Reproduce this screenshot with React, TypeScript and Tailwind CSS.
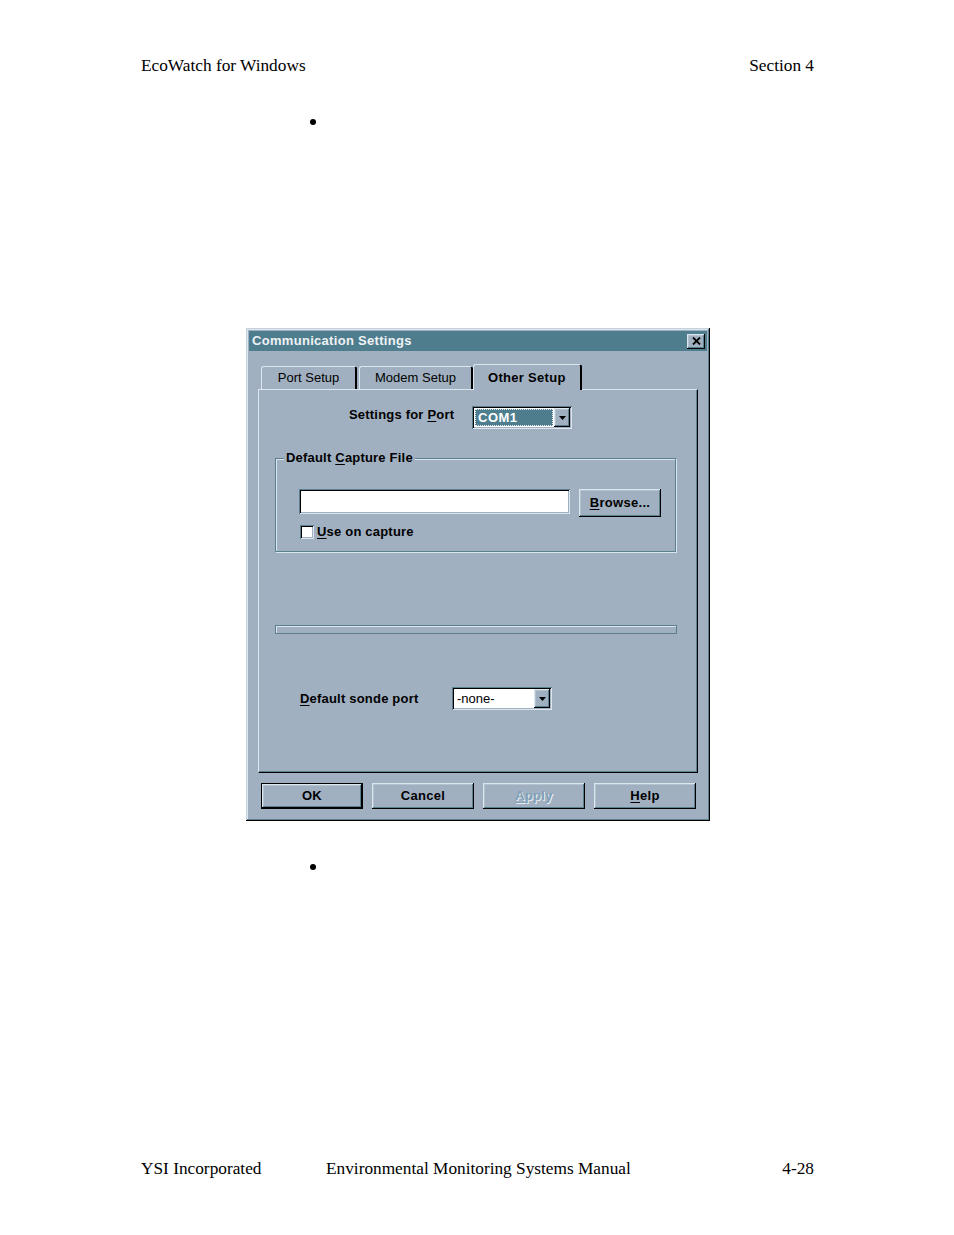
import React from 'react';

// Win95-style bevels, tinted to the blue-grey scheme of the screenshot
const raised =
  'shadow-[inset_-1px_-1px_0_#000,inset_1px_1px_0_#dce6ee,inset_-2px_-2px_0_#5a7f8e,inset_2px_2px_0_#b4c2ce]';
const sunken =
  'shadow-[inset_1px_1px_0_#5a7f8e,inset_-1px_-1px_0_#dce6ee,inset_2px_2px_0_#000,inset_-2px_-2px_0_#a0b0c0]';

const U = ({ children }: { children: React.ReactNode }) => <span className="underline underline-offset-2">{children}</span>;

const Arrow = () => (
  <div className={`w-[16px] h-full bg-[#a0b0c0] flex items-center justify-center ${raised}`}>
    <svg width="7" height="4" viewBox="0 0 7 4">
      <path d="M0 0h7L3.5 4z" fill="#000" />
    </svg>
  </div>
);

const Tab = ({ label, selected }: { label: string; selected?: boolean }) => (
  <div
    className={
      selected
        ? 'relative z-10 -mb-px -mx-[2px] h-[26px] px-[14px] flex items-center bg-[#a0b0c0] rounded-t-[3px] border-l border-t border-[#dce6ee] border-r-2 border-r-black font-bold tracking-[0.3px]'
        : 'h-[23px] flex items-center justify-center bg-[#a0b0c0] rounded-t-[3px] border-l border-t border-[#dce6ee] border-r-2 border-r-black'
    }
  >
    {label}
  </div>
);

const Button = ({ children, isDefault, disabled }: { children: React.ReactNode; isDefault?: boolean; disabled?: boolean }) => (
  <div
    className={`w-[102px] h-[26px] flex items-center justify-center font-bold tracking-[0.3px] bg-[#a0b0c0] ${raised} ${
      isDefault ? 'border border-black' : ''
    } ${disabled ? 'text-[#7fa0b8] [text-shadow:1px_1px_0_#e8eef2]' : 'text-black'}`}
  >
    {children}
  </div>
);

const Bullet = () => (
  <div className="pl-[310px]">
    <div className="w-[6px] h-[6px] rounded-full bg-black" />
  </div>
);

export default function App() {
  return (
    <div className="w-[954px] h-[1235px] bg-white text-black relative font-['Liberation_Serif',serif]">
      <div className="flex justify-between pl-[141px] pr-[140px] pt-[56px] text-[17.3px] leading-[20px]">
        <span>EcoWatch for Windows</span>
        <span>Section 4</span>
      </div>

      <div className="mt-[43px]">
        <Bullet />
      </div>

      {/* dialog */}
      <div
        className={`ml-[246px] mt-[203px] w-[464px] h-[493px] bg-[#a0b0c0] p-[3px] font-['Liberation_Sans',Arial,sans-serif] text-[13px] text-black shadow-[inset_-1px_-1px_0_#000,inset_1px_1px_0_#c4d2dc,inset_-2px_-2px_0_#5a7f8e,inset_2px_2px_0_#dce6ee]`}
      >
        <div className="h-[20px] bg-[#4e7e8e] flex items-center justify-between pl-[3px] pr-[2px]">
          <span className="font-bold text-[#eef2f4] tracking-[0.3px]">Communication Settings</span>
          <div className={`w-[18px] h-[15px] bg-[#a0b0c0] flex items-center justify-center ${raised}`}>
            <svg width="9" height="8" viewBox="0 0 9 8">
              <path d="M1 0.5L8 7.5M8 0.5L1 7.5" stroke="#000" strokeWidth="1.8" />
            </svg>
          </div>
        </div>

        {/* tabs */}
        <div className="mt-[12px] ml-[9px] mr-[9px]">
          <div className="flex items-end h-[26px] pl-[3px]">
            <div className="w-[96px]">
              <Tab label="Port Setup" />
            </div>
            <div className="w-[2px]" />
            <div className="w-[114px]">
              <Tab label="Modem Setup" />
            </div>
            <div className="w-[2px]" />
            <Tab label="Other Setup" selected />
          </div>

          <div className="relative h-[384px] border-l border-t border-[#dce6ee] border-r border-b border-r-black border-b-black shadow-[inset_-1px_-1px_0_#5a7f8e]">
            <div className="flex items-center mt-[16px] pl-[90px] h-[23px]">
              <span className="relative -top-[3px] font-bold w-[123px] tracking-[0.2px]">
                Settings for <U>P</U>ort
              </span>
              <div className={`w-[100px] h-[23px] bg-white flex p-[2px] ${sunken}`}>
                <div className="flex-1 p-[1px] bg-white">
                  <div className="h-full bg-[#4e7e8e] outline-1 outline-dotted outline-[#e8eef0] -outline-offset-1 flex items-center pl-[3px] text-white font-bold tracking-[0.5px]">
                    COM1
                  </div>
                </div>
                <Arrow />
              </div>
            </div>

            {/* group box */}
            <div className="relative mt-[29px] ml-[16px] w-[401px] h-[94px] border border-[#5a7f8e] shadow-[inset_1px_1px_0_#dce6ee,1px_1px_0_#dce6ee]">
              <span className="absolute -top-[9px] left-[8px] px-[2px] bg-[#a0b0c0] font-bold leading-[16px] tracking-[0.2px]">
                Default <U>C</U>apture File
              </span>
              <div className="flex items-start mt-[30px] ml-[23px]">
                <div className={`w-[271px] h-[25px] bg-white ${sunken}`} />
                <div className={`ml-[9px] w-[82px] h-[28px] flex items-center justify-center font-bold tracking-[0.3px] ${raised}`}>
                  <span>
                    <U>B</U>rowse...
                  </span>
                </div>
              </div>
              <div className="flex items-center mt-[5px] ml-[24px]">
                <div className={`w-[14px] h-[14px] bg-white ${sunken}`} />
                <span className="ml-[3px] font-bold tracking-[0.2px]">
                  <U>U</U>se on capture
                </span>
              </div>
            </div>

            {/* separator bar */}
            <div className="mt-[73px] ml-[16px] w-[402px] h-[9px] border border-[#5a7f8e] shadow-[inset_1px_1px_0_#dce6ee]" />

            <div className="flex items-center mt-[53px] ml-[41px] h-[23px]">
              <span className="font-bold w-[152px] tracking-[0.2px]">
                <U>D</U>efault sonde port
              </span>
              <div className={`w-[100px] h-[23px] bg-white flex p-[2px] ${sunken}`}>
                <div className="flex-1 flex items-center pl-[3px] text-black">-none-</div>
                <Arrow />
              </div>
            </div>
          </div>
        </div>

        {/* buttons */}
        <div className="flex mt-[10px] ml-[12px] gap-[9px]">
          <Button isDefault>OK</Button>
          <Button>Cancel</Button>
          <Button disabled>
            <U>A</U>pply
          </Button>
          <Button>
            <U>H</U>elp
          </Button>
        </div>
      </div>

      <div className="mt-[43px]">
        <Bullet />
      </div>

      <div className="absolute left-[141px] right-[140px] top-[1159px] flex text-[17.3px] leading-[20px]">
        <span className="w-[185px]">YSI Incorporated</span>
        <span>Environmental Monitoring Systems Manual</span>
        <span className="ml-auto">4-28</span>
      </div>
    </div>
  );
}
